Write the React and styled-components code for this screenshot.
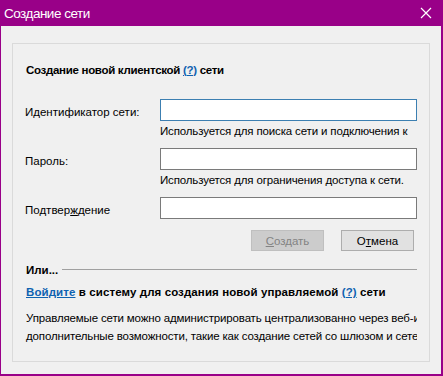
import React from "react";
import styled, { createGlobalStyle, css } from "styled-components";

const Global = createGlobalStyle`
  html, body {
    margin: 0;
    padding: 0;
    background: #f0f0f0;
  }
  body {
    font-family: "Liberation Sans", Arial, sans-serif;
    font-size: 11.5px;
    color: #000;
  }
`;

const Window = styled.div`
  width: 443px;
  height: 376px;
  box-sizing: border-box;
  border-style: solid;
  border-color: #990088;
  border-width: 0 2px 2px 1px;
  background: #f0f0f0;
  display: flex;
  flex-direction: column;
`;

const TitleBar = styled.div`
  height: 26px;
  background: #990088;
  display: flex;
  align-items: center;
  justify-content: space-between;
  padding: 0 9px 0 3px;
  color: #fff;
`;

const Title = styled.span`
  font-size: 13.5px;
  letter-spacing: -0.5px;
  line-height: 20px;
  padding-top: 1px;
`;

const CloseIcon = () => (
  <svg width="12" height="12" viewBox="0 0 12 12">
    <path d="M1 1 L11 11 M11 1 L1 11" stroke="#fff" strokeWidth="1.2" />
  </svg>
);

const Body = styled.div`
  flex: 1;
  padding: 17px 11px 12px 11px;
  display: flex;
`;

const Panel = styled.div`
  flex: 1;
  border: 1px solid #dadada;
  padding: 18px 12px 0 12px;
  overflow: hidden;
`;

const Heading = styled.div`
  font-weight: bold;
  line-height: 16px;
  padding-left: 1px;
  letter-spacing: -0.3px;
`;

const Link = styled.span`
  color: #0f62b0;
  ${(p) =>
    p.underline &&
    css`
      text-decoration: underline;
    `}
`;

const Form = styled.div`
  display: grid;
  grid-template-columns: 135px 257px;
  row-gap: 5px;
  margin-top: 21px;
`;

const Label = styled.div`
  line-height: 22px;
  padding-top: 2px;
`;

const Field = styled.div`
  display: flex;
  flex-direction: column;
`;

const Input = styled.div`
  height: 22px;
  box-sizing: border-box;
  background: #fff;
  border: 1px solid ${(p) => (p.focused ? "#3c7fb1" : "#7a7a7a")};
`;

const Hint = styled.div`
  margin-top: 3px;
  height: 19px;
  line-height: 14px;
  letter-spacing: -0.15px;
  overflow: hidden;
`;

const Buttons = styled.div`
  display: flex;
  justify-content: flex-end;
  gap: 17px;
  margin-top: 9px;
  padding-right: 3px;
`;

const Button = styled.div`
  width: 73px;
  height: 21px;
  box-sizing: border-box;
  display: flex;
  align-items: center;
  justify-content: center;
  border: 1px solid #adadad;
  background: #e1e1e1;
  ${(p) =>
    p.disabled &&
    css`
      background: #cccccc;
      border-color: #bfbfbf;
      color: #838383;
    `}
`;

const U = styled.span`
  text-decoration: underline;
`;

const Separator = styled.div`
  display: flex;
  align-items: center;
  gap: 4px;
  margin-top: 11px;
  line-height: 16px;
  font-weight: bold;
  padding-left: 1px;
  &::after {
    content: "";
    flex: 1;
    height: 1px;
    background: #a0a0a0;
    margin-top: -2px;
  }
`;

const Login = styled.div`
  margin-top: 6px;
  line-height: 16px;
  font-weight: bold;
  padding-left: 1px;
  letter-spacing: 0.1px;
`;

const Para = styled.div`
  margin-top: 9px;
  width: 391px;
  white-space: nowrap;
  overflow: hidden;
  line-height: 18px;
  padding-left: 1px;
  letter-spacing: -0.15px;
`;

export default function App() {
  return (
    <>
      <Global />
      <Window>
        <TitleBar>
          <Title>Создание сети</Title>
          <CloseIcon />
        </TitleBar>
        <Body>
          <Panel>
            <Heading>
              Создание новой клиентской <Link underline>(?)</Link> сети
            </Heading>
            <Form>
              <Label>Идентификатор сети:</Label>
              <Field>
                <Input focused />
                <Hint>
                  Используется для поиска сети и подключения к сети.
                </Hint>
              </Field>
              <Label>Пароль:</Label>
              <Field>
                <Input />
                <Hint>Используется для ограничения доступа к сети.</Hint>
              </Field>
              <Label>
                Подтвер<U>ж</U>дение
              </Label>
              <Field>
                <Input />
              </Field>
            </Form>
            <Buttons>
              <Button disabled>
                <span>
                  <U>С</U>оздать
                </span>
              </Button>
              <Button>
                <span>
                  О<U>т</U>мена
                </span>
              </Button>
            </Buttons>
            <Separator>Или...</Separator>
            <Login>
              <Link underline>Войдите</Link> в систему для создания новой
              управляемой <Link underline>(?)</Link> сети
            </Login>
            <Para>
              Управляемые сети можно администрировать централизованно через
              веб-интерфейс.
              <br />
              дополнительные возможности, такие как создание сетей со шлюзом и
              сетей с ограниченным доступом.
            </Para>
          </Panel>
        </Body>
      </Window>
    </>
  );
}
